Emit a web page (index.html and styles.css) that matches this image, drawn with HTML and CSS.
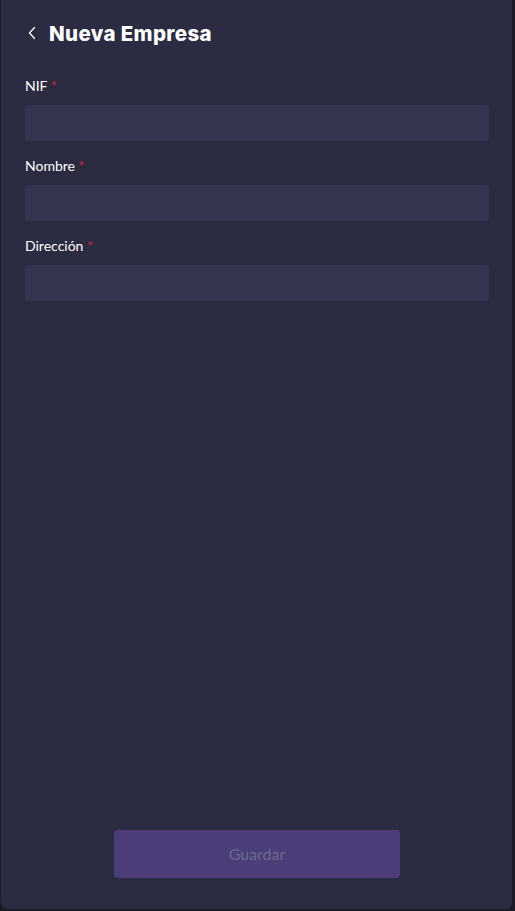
FILE: index.html
```html
<!DOCTYPE html>
<html lang="es">
<head>
<meta charset="utf-8">
<title>Nueva Empresa</title>
<link rel="stylesheet" href="styles.css">
</head>
<body>
<div class="panel">
  <header class="header">
    <button class="back" aria-label="Volver">
      <svg width="10" height="14" viewBox="0 0 10 14"><path d="M7.5 1.5 L2.5 7 L7.5 12.5" fill="none" stroke="#ffffff" stroke-width="1.3" stroke-linecap="round" stroke-linejoin="round"/></svg>
    </button>
    <h1 class="title">Nueva Empresa</h1>
  </header>
  <form class="form">
    <div class="field">
      <label class="label">NIF <span class="req">*</span></label>
      <input class="input" type="text">
    </div>
    <div class="field">
      <label class="label">Nombre <span class="req">*</span></label>
      <input class="input" type="text">
    </div>
    <div class="field">
      <label class="label">Dirección <span class="req">*</span></label>
      <input class="input" type="text">
    </div>
  </form>
  <div class="actions">
    <button class="save" type="button">Guardar</button>
  </div>
</div>
</body>
</html>
```
FILE: styles.css
```css
* { box-sizing: border-box; }
html, body { margin: 0; padding: 0; }
body {
  background: #1b1b28;
  width: 515px;
  height: 911px;
  overflow: hidden;
  font-family: "Lato", "Liberation Sans", sans-serif;
}
.panel {
  margin: 0 3px 0 1px;
  height: 909px;
  background: #2b2b42;
  border-radius: 0 0 6px 6px;
  display: flex;
  flex-direction: column;
  padding: 0 23px 0 24px;
}
.header {
  display: flex;
  align-items: center;
  height: 66px;
}
.back {
  background: none;
  border: none;
  padding: 0;
  margin: 0 12px 0 2px;
  width: 10px;
  height: 14px;
  display: flex;
  align-items: center;
  justify-content: center;
}
.title {
  margin: 0;
  color: #ffffff;
  font-family: "Inter", "Open Sans", sans-serif;
  font-weight: 800;
  font-size: 20.5px;
  letter-spacing: 0.35px;
}
.form {
  display: flex;
  flex-direction: column;
  gap: 17px;
  padding-top: 12px;
}
.field {
  display: flex;
  flex-direction: column;
  gap: 12px;
}
.label {
  color: #ffffff;
  font-size: 14px;
  line-height: 15px;
  font-weight: 400;
}
.req { color: #d3222f; }
.input {
  height: 36px;
  width: 100%;
  background: #36354f;
  border: none;
  border-radius: 4px;
  outline: none;
}
.actions {
  margin-top: auto;
  display: flex;
  justify-content: center;
  padding-bottom: 31px;
}
.save {
  width: 286px;
  height: 48px;
  background: #4b3d78;
  border: none;
  border-radius: 4px;
  color: #6e6a8e;
  font-family: "Lato", sans-serif;
  font-size: 16px;
  padding: 0 0 2px;
}
```
